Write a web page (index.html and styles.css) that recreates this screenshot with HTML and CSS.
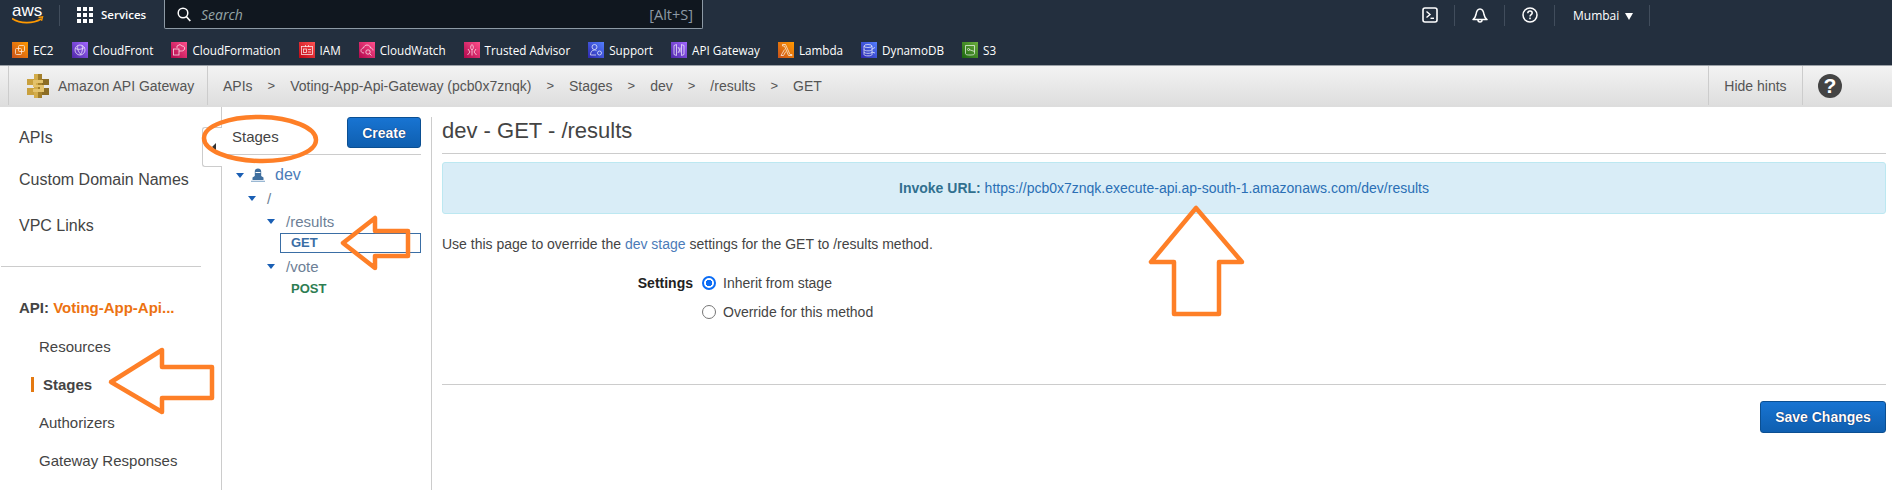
FILE: index.html
```html
<!DOCTYPE html>
<html>
  <head>
    <title>Amazon API Gateway</title>
    <link rel="stylesheet" href="styles.css">
  </head>

  <body>
    <div class="nav-top">
      <svg class="aws-logo" width="32" height="26" viewBox="0 0 32 26">
        <text x="0" y="14" class="aws-word">aws</text>
        <path d="M0 16.500c8 5.500 21 5.500 29 .5" fill="none" stroke="#f90" stroke-width="1.700"/>
        <path d="M26.500 15.500l4-.6-1 3.800" fill="none" stroke="#f90" stroke-width="1.400"/>
      </svg>
      <span class="nav-sep nav-sep-logo"></span>
      <div class="grid-icon">
        <i></i><i></i><i></i><i></i><i></i><i></i><i></i><i></i><i></i>
      </div>
      <span class="services">Services</span>
      <div class="search">
        <svg width="14" height="15" viewBox="0 0 14 15">
          <circle cx="6" cy="6" r="4.800" fill="none" stroke="#fff" stroke-width="1.500"/>
          <path d="M9.500 9.800l3.800 4.200" stroke="#fff" stroke-width="1.700"/>
        </svg>
        <span class="search-text">Search</span>
        <span class="search-key">[Alt+S]</span>
      </div>
      <div class="nav-right">
        <span class="nav-btn">
          <svg width="16" height="16" viewBox="0 0 16 16">
            <rect x="1" y="1" width="14" height="14" rx="2" fill="none" stroke="#fff" stroke-width="1.600"/>
            <path d="M4.500 4.500L8 7.500l-3.500 3" fill="none" stroke="#fff" stroke-width="1.400"/>
            <path d="M8.500 11.300h3.500" stroke="#fff" stroke-width="1.400"/>
          </svg>
        </span>
        <span class="nav-btn">
          <svg width="16" height="16" viewBox="0 0 16 16">
            <path d="M1 12.500c1.500-1 2.500-2.500 3-5C4.500 4 6 2 8 2s3.500 2 4 5.500c.5 2.500 1.500 4 3 5z" fill="none" stroke="#fff" stroke-width="1.500" stroke-linejoin="round"/>
            <path d="M6 13a2 2 0 0 0 4 0" fill="none" stroke="#fff" stroke-width="1.500"/>
          </svg>
        </span>
        <span class="nav-btn">
          <svg width="16" height="16" viewBox="0 0 16 16">
            <circle cx="8" cy="8" r="7" fill="none" stroke="#fff" stroke-width="1.500"/>
            <path d="M5.800 6.200C5.900 4.800 6.900 4.100 8 4.100c1.300 0 2.200.8 2.200 1.900 0 1.700-2.200 1.700-2.200 3.500" fill="none" stroke="#fff" stroke-width="1.500"/>
            <rect x="7.200" y="10.600" width="1.600" height="1.600" fill="#fff"/>
          </svg>
        </span>
        <span class="nav-region">Mumbai <span class="caret"></span></span>
      </div>
    </div>

    <div class="nav-fav">
      <a class="fav"><span class="fav-icon ic-orange"><svg viewBox="0 0 16 16"><rect x="6.500" y="3.500" width="6" height="6" rx="1"/><rect x="3.500" y="6.500" width="6" height="6" rx="1"/></svg></span>EC2</a>
      <a class="fav"><span class="fav-icon ic-purple"><svg viewBox="0 0 16 16"><circle cx="8" cy="8" r="5"/><path d="M3.500 6.500c3 1.500 6 1 9-1M6 3.500c-1 3 0 6 3 9M10 3.500c1 3 .5 6-1.500 9"/></svg></span>CloudFront</a>
      <a class="fav"><span class="fav-icon ic-pink"><svg viewBox="0 0 16 16"><rect x="2.500" y="7" width="5.500" height="6"/><path d="M6 6V4l3-1.500L11 4c2 0 3 1.200 2.500 3s-2 2-3 2H8"/></svg></span>CloudFormation</a>
      <a class="fav"><span class="fav-icon ic-red"><svg viewBox="0 0 16 16"><rect x="2.500" y="4.500" width="11" height="8"/><rect x="4.500" y="7" width="3" height="3.500"/><path d="M9 7.500h3M9 10h3M6.500 3v2M9.500 3v2"/></svg></span>IAM</a>
      <a class="fav"><span class="fav-icon ic-pink"><svg viewBox="0 0 16 16"><path d="M5 11c-2 0-3-1-3-2.500S3.500 6 4.500 6C5 4 6.500 3 8 3c2 0 3.500 1.500 3.500 3 1.500 0 2.500 1 2.500 2.500"/><circle cx="9" cy="10" r="2.200"/><path d="M10.500 11.500l2 2"/></svg></span>CloudWatch</a>
      <a class="fav"><span class="fav-icon ic-pink"><svg viewBox="0 0 16 16"><path d="M8 2.500c1.800 1.500 1.800 4 0 5.500-1.800-1.500-1.800-4 0-5.500zM8 8v5.500M4 7l2 3-2.500 3M12 7l-2 3 2.500 3"/></svg></span>Trusted Advisor</a>
      <a class="fav"><span class="fav-icon ic-blue"><svg viewBox="0 0 16 16"><circle cx="6.500" cy="5" r="2.500"/><path d="M2.500 13c0-3 1.500-5 4-5 1 0 1.500.2 2 .6M2.500 13H8"/><circle cx="11.500" cy="11" r="2"/></svg></span>Support</a>
      <a class="fav"><span class="fav-icon ic-purple"><svg viewBox="0 0 16 16"><path d="M3 3.500v9l2.500 1v-11zM13 3.500v9l-2.500 1v-11zM7 5l1.500 3L7 11M9 5.500v5"/></svg></span>API Gateway</a>
      <a class="fav"><span class="fav-icon ic-orange"><svg viewBox="0 0 16 16"><path d="M4.500 2.500H7.500L12 12.500h2v1H10.500L6.500 4H4.500zM6.500 7.500L3 13.500h2.500L7.800 9.500"/></svg></span>Lambda</a>
      <a class="fav"><span class="fav-icon ic-blue"><svg viewBox="0 0 16 16"><ellipse cx="7" cy="4" rx="4" ry="1.500"/><path d="M3 4v8.500c0 1.800 8 1.800 8 0V4M3 7.500c0 1.800 8 1.800 8 0M3 10c0 1.800 8 1.800 8 0M11 7l3-1.500M11 10l3 1"/></svg></span>DynamoDB</a>
      <a class="fav"><span class="fav-icon ic-green"><svg viewBox="0 0 16 16"><path d="M3.500 3.500h9v8c0 1-1 1.500-4.500 1.500s-4.500-.5-4.500-1.500zM7 7.500l5.500 2"/><circle cx="6.500" cy="7.500" r="1"/></svg></span>S3</a>
    </div>

    <div class="crumbs">
      <div class="crumb-brand">
        <svg width="22" height="24" viewBox="0 0 22 24">
          <rect x="0" y="5" width="8" height="6" fill="#c9a13f"/>
          <rect x="14" y="5" width="8" height="6" fill="#8c6d24"/>
          <rect x="0" y="14" width="8" height="7" fill="#c9a13f"/>
          <rect x="14" y="14" width="8" height="7" fill="#8c6d24"/>
          <rect x="7" y="0" width="4" height="24" fill="#d3ac4a"/>
          <rect x="11" y="0" width="4" height="24" fill="#a37f2a"/>
          <path d="M6 6h10v3H9v2h8v7H6v-3h7v-2H6z" fill="#e3c26c"/>
        </svg>
        <span>Amazon API Gateway</span>
      </div>
      <div class="crumb-path">
        <a>APIs</a><b>&gt;</b>
        <a>Voting-App-Api-Gateway (pcb0x7znqk)</a><b>&gt;</b>
        <a>Stages</a><b>&gt;</b>
        <a>dev</a><b>&gt;</b>
        <a>/results</a><b>&gt;</b>
        <a>GET</a>
      </div>
      <div class="crumb-hints">Hide hints</div>
      <div class="crumb-help"><span class="help-round">?</span></div>
    </div>

    <div class="page">
      <div class="side">
        <a class="side-link">APIs</a>
        <a class="side-link side-custom">Custom Domain Names</a>
        <a class="side-link side-vpc">VPC Links</a>
        <div class="side-line"></div>
        <div class="side-api">API: <span>Voting-App-Api...</span></div>
        <a class="side-sub">Resources</a>
        <a class="side-sub side-active">Stages</a>
        <a class="side-sub">Authorizers</a>
        <a class="side-sub">Gateway Responses</a>
      </div>

      <div class="tree">
        <div class="tree-head">
          <span class="tree-title">Stages</span>
          <button class="btn-blue btn-create">Create</button>
        </div>
        <span class="tree-tab"></span>
        <div class="node node-0"><span class="tri"></span>
          <svg class="ship" width="14" height="14" viewBox="0 0 14 14">
            <path d="M7 0.500c2 0 3.200 1.300 3.200 3V8l2.300 1.500V12h-11V9.500L3.800 8V3.500c0-1.700 1.200-3 3.200-3z" fill="#3f6f9f"/>
            <path d="M4.500 4.500h5" stroke="#fff" stroke-width="1"/>
            <path d="M0 13.300h14" stroke="#8fb0cf" stroke-width="1.200"/>
          </svg>
          <a>dev</a></div>
        <div class="node node-1"><span class="tri"></span><a class="muted">/</a></div>
        <div class="node node-2"><span class="tri"></span><a class="muted">/results</a></div>
        <div class="method method-on">GET</div>
        <div class="node node-2 node-vote"><span class="tri"></span><a class="muted">/vote</a></div>
        <div class="method method-post">POST</div>
      </div>

      <div class="main">
        <h2 class="main-title">dev - GET - /results</h2>
        <div class="invoke"><b>Invoke URL:</b> <a>https://pcb0x7znqk.execute-api.ap-south-1.amazonaws.com/dev/results</a></div>
        <p class="intro">Use this page to override the <a>dev stage</a> settings for the GET to /results method.</p>
        <div class="settings">
          <div class="settings-row">
            <span class="settings-label">Settings</span>
            <span class="radio radio-on"></span>
            <span>Inherit from stage</span>
          </div>
          <div class="settings-row settings-row2">
            <span class="settings-label"></span>
            <span class="radio"></span>
            <span>Override for this method</span>
          </div>
        </div>
        <div class="main-foot">
          <button class="btn-blue btn-save">Save Changes</button>
        </div>
      </div>
    </div>

    <!-- orange marks drawn over the screenshot -->
    <svg class="marks" width="1892" height="490" viewBox="0 0 1892 490">
      <ellipse cx="260" cy="139" rx="56" ry="22" transform="rotate(1 260 139)"/>
      <path d="M111 382L162 350V367H212V398H162V412Z"/>
      <path d="M343 243L375 218V231H408V256H375V268Z"/>
      <path d="M1196 208L1151 262H1174V314H1219V262H1242Z"/>
    </svg>
  </body>
</html>
```

FILE: styles.css
```css
body {
  margin: 0;
  height: 490px;
  overflow: hidden;
  position: relative;
  background: #fff;
  font-family: "Liberation Sans", Arial, sans-serif;
  font-size: 13px;
  color: #444;
}
a {
  text-decoration: none;
}

/* top bar */
.nav-top {
  display: flex;
  height: 35px;
  background: #232f3e;
  color: #fff;
  font-family: "Open Sans", sans-serif;
  font-size: 12px;
}
.aws-logo {
  margin: 2px 0 0 12px;
}
.aws-word {
  font-family: "Liberation Sans", sans-serif;
  font-size: 17px;
  fill: #fff;
}
.nav-sep-logo {
  width: 1px;
  height: 21px;
  margin: 5px 17px 0 15px;
  background: #414d5c;
}
.grid-icon {
  display: grid;
  grid-template-columns: repeat(3, 4px);
  grid-auto-rows: 4px;
  gap: 2px;
  margin-top: 7px;
  height: 16px;
}
.grid-icon i {
  background: #fff;
}
.services {
  margin: 7px 17px 0 8px;
  font-weight: 600;
  width: 46px;
  font-size: 11.500px;
}
.search {
  display: flex;
  align-items: center;
  box-sizing: border-box;
  width: 539px;
  height: 29px;
  padding: 0 9px 0 12px;
  background: #10171f;
  border: 1px solid #8d9aa5;
  border-top: 0;
  border-radius: 0 0 2px 2px;
}
.search-text {
  margin-left: 10px;
  font-style: italic;
  font-size: 14px;
  color: #95a5a6;
}
.search-key {
  margin-left: auto;
  color: #8d9aa5;
  font-size: 14.500px;
}
.nav-right {
  display: flex;
  margin-left: 710px;
  height: 21px;
  margin-top: 5px;
}
.nav-btn {
  display: flex;
  align-items: center;
  justify-content: center;
  width: 49px;
  border-right: 1px solid #414d5c;
  padding-bottom: 1px;
}
.nav-btn:first-child {
  margin-left: -8px;
}
.nav-region {
  box-sizing: border-box;
  width: 95px;
  padding: 2px 0 0 18px;
  border-right: 1px solid #414d5c;
  white-space: nowrap;
}
.caret {
  display: inline-block;
  margin-left: 3px;
  border-left: 4px solid transparent;
  border-right: 4px solid transparent;
  border-top: 7px solid #fff;
}

/* favourites */
.nav-fav {
  display: flex;
  align-items: center;
  height: 30px;
  padding-left: 12px;
  background: #232f3e;
  font-family: "Open Sans", sans-serif;
  font-size: 11.700px;
  color: #fff;
}
.fav {
  display: flex;
  align-items: center;
  margin-right: 18px;
  white-space: nowrap;
}
.fav-icon {
  width: 16px;
  height: 16px;
  margin-right: 5px;
}
.fav-icon svg {
  display: block;
  fill: none;
  stroke: #fff;
  stroke-width: 0.800;
  opacity: 0.85;
}
.ic-orange { background: linear-gradient(45deg, #c8511b, #ff9900); }
.ic-purple { background: linear-gradient(45deg, #4d27a8, #a166ff); }
.ic-pink { background: linear-gradient(45deg, #b0084d, #ff4f8b); }
.ic-red { background: linear-gradient(45deg, #bd0816, #ff5252); }
.ic-blue { background: linear-gradient(45deg, #2e27ad, #527fff); }
.ic-green { background: linear-gradient(45deg, #1b660f, #6cae3e); }

/* breadcrumb */
.crumbs {
  display: flex;
  box-sizing: border-box;
  height: 42px;
  padding-left: 8px;
  border-top: 1px solid #9aa0a6;
  border-bottom: 2px solid #ddd;
  background: linear-gradient(#f3f3f3, #dedede);
  font-size: 14px;
  color: #555;
}
.crumb-brand {
  display: flex;
  align-items: center;
  width: 200px;
  box-sizing: border-box;
  padding-left: 18px;
  border-left: 1px solid #ccc;
  border-right: 1px solid #ccc;
}
.crumb-brand span {
  margin-left: 9px;
  white-space: nowrap;
}
.crumb-path {
  display: flex;
  align-items: center;
  box-sizing: border-box;
  width: 1500px;
  padding-left: 15px;
  white-space: nowrap;
}
.crumb-path b {
  font-weight: normal;
  font-size: 13px;
  margin: 0 15px;
}
.crumb-hints {
  display: flex;
  align-items: center;
  justify-content: center;
  width: 93px;
  border-left: 1px solid #ccc;
  border-right: 1px solid #ccc;
  flex: none;
}
.crumb-help {
  flex: none;
  display: flex;
  align-items: center;
  padding-left: 15px;
}
.help-round {
  display: block;
  width: 24px;
  height: 24px;
  border-radius: 50%;
  background: #444;
  color: #fff;
  text-align: center;
  font-weight: bold;
  font-size: 21px;
  line-height: 24px;
}

/* columns */
.page {
  display: flex;
  height: 383px;
}
.side {
  flex: none;
  box-sizing: border-box;
  width: 222px;
  padding-top: 21px;
  border-right: 1px solid #ccc;
}
.side-link {
  display: block;
  margin-left: 19px;
  font-size: 16px;
  line-height: 20px;
}
.side-custom {
  margin-top: 22px;
}
.side-vpc {
  margin-top: 26px;
}
.side-line {
  width: 200px;
  margin: 30px 0 31px 1px;
  border-top: 1px solid #ccc;
}
.side-api {
  margin-left: 19px;
  font-size: 15px;
  font-weight: bold;
  line-height: 20px;
  white-space: nowrap;
}
.side-api span {
  color: #ec7211;
}
.side-sub {
  display: block;
  margin: 19px 0 0 39px;
  font-size: 15px;
  line-height: 19px;
}
.side-active {
  font-weight: bold;
  margin-left: 31px;
  padding-left: 12px;
  background: linear-gradient(#e47911, #e47911) no-repeat 0 2px / 3px 15px;
}

/* stages tree */
.tree {
  flex: none;
  position: relative;
  box-sizing: border-box;
  width: 210px;
  padding-right: 10px;
  border-right: 1px solid #ccc;
  margin-top: 10px;
}
.tree-head {
  display: flex;
  justify-content: space-between;
  box-sizing: border-box;
  height: 38px;
  border-bottom: 1px solid #ccc;
  padding-left: 10px;
}
.tree-title {
  padding-top: 11px;
  font-size: 15px;
}
.tree-tab {
  position: absolute;
  left: -20px;
  top: 10px;
  width: 19px;
  height: 38px;
  border: 1px solid #ccc;
  border-right: 0;
  border-radius: 3px 0 0 3px;
  background: #fff;
}
.tree-tab::after {
  content: "";
  position: absolute;
  left: 9px;
  top: 15px;
  border-top: 4px solid transparent;
  border-bottom: 4px solid transparent;
  border-right: 4px solid #333;
}
.btn-blue {
  border: 1px solid #0b4f92;
  border-radius: 3px;
  background: linear-gradient(#1874d2, #0f5fb0);
  color: #fff;
  font-family: "Liberation Sans", sans-serif;
  font-weight: bold;
  font-size: 14px;
  text-shadow: 0 0 1px #003;
}
.btn-create {
  width: 74px;
  height: 31px;
}
.node {
  display: flex;
  align-items: center;
  height: 22px;
  font-size: 15px;
}
.node a {
  color: #4b7bb8;
}
.node a.muted {
  color: #6d7f96;
}
.tri {
  flex: none;
  width: 0;
  height: 0;
  border-left: 4.500px solid transparent;
  border-right: 4.500px solid transparent;
  border-top: 5px solid #1a5fb4;
}
.node-0 {
  margin-top: 9px;
  padding-left: 14px;
  font-size: 16px;
}
.ship {
  margin: 0 10px 0 7px;
}
.node-1 {
  padding-left: 26px;
  margin-top: 1px;
}
.node-1 .tri {
  margin-right: 11px;
}
.node-2 {
  padding-left: 45px;
  margin-top: 1px;
}
.node-2 .tri {
  margin-right: 11px;
}
.node-vote {
  margin-top: 2px;
}
.method {
  box-sizing: border-box;
  margin-left: 58px;
  height: 20px;
  padding-left: 10px;
  font-size: 13px;
  font-weight: bold;
  line-height: 18px;
  border: 1px solid transparent;
}
.method-on {
  margin-top: 1px;
  color: #3a6ea5;
  border-color: #3a6ea5;
}
.method-post {
  margin-top: 2px;
  color: #2e7d52;
}

/* main panel */
.main {
  flex: 1;
  min-width: 0;
  padding: 0 6px 0 10px;
  font-size: 14px;
}
.main-title {
  margin: 0;
  height: 47px;
  box-sizing: border-box;
  padding-top: 11px;
  border-bottom: 1px solid #ccc;
  font-size: 22px;
  font-weight: normal;
  line-height: 26px;
}
.invoke {
  box-sizing: border-box;
  height: 52px;
  margin-top: 8px;
  padding-top: 17px;
  border: 1px solid #bce8f1;
  border-radius: 3px;
  background: #d9edf7;
  color: #31708f;
  text-align: center;
}
.invoke a {
  color: #2a6fb5;
}
.intro {
  margin: 22px 0 0;
  line-height: 16px;
}
.intro a {
  color: #4b7bb8;
}
.settings {
  margin-top: 21px;
}
.settings-row {
  display: flex;
  align-items: center;
  height: 20px;
}
.settings-row2 {
  margin-top: 9px;
}
.settings-label {
  box-sizing: border-box;
  width: 260px;
  padding-right: 9px;
  text-align: right;
  font-weight: bold;
  color: #222;
}
.radio {
  box-sizing: border-box;
  width: 14px;
  height: 14px;
  margin-right: 7px;
  border: 1px solid #767676;
  border-radius: 50%;
}
.radio-on {
  border: 2px solid #0a6cf5;
  background: radial-gradient(circle, #0a6cf5 3px, #fff 3.500px);
}
.main-foot {
  margin-top: 62px;
  padding-top: 16px;
  border-top: 1px solid #ccc;
  text-align: right;
}
.btn-save {
  width: 126px;
  height: 32px;
}

.marks {
  position: absolute;
  left: 0;
  top: 0;
  fill: none;
  stroke: #fe7f27;
  stroke-width: 4.500;
  stroke-linejoin: round;
}
```
